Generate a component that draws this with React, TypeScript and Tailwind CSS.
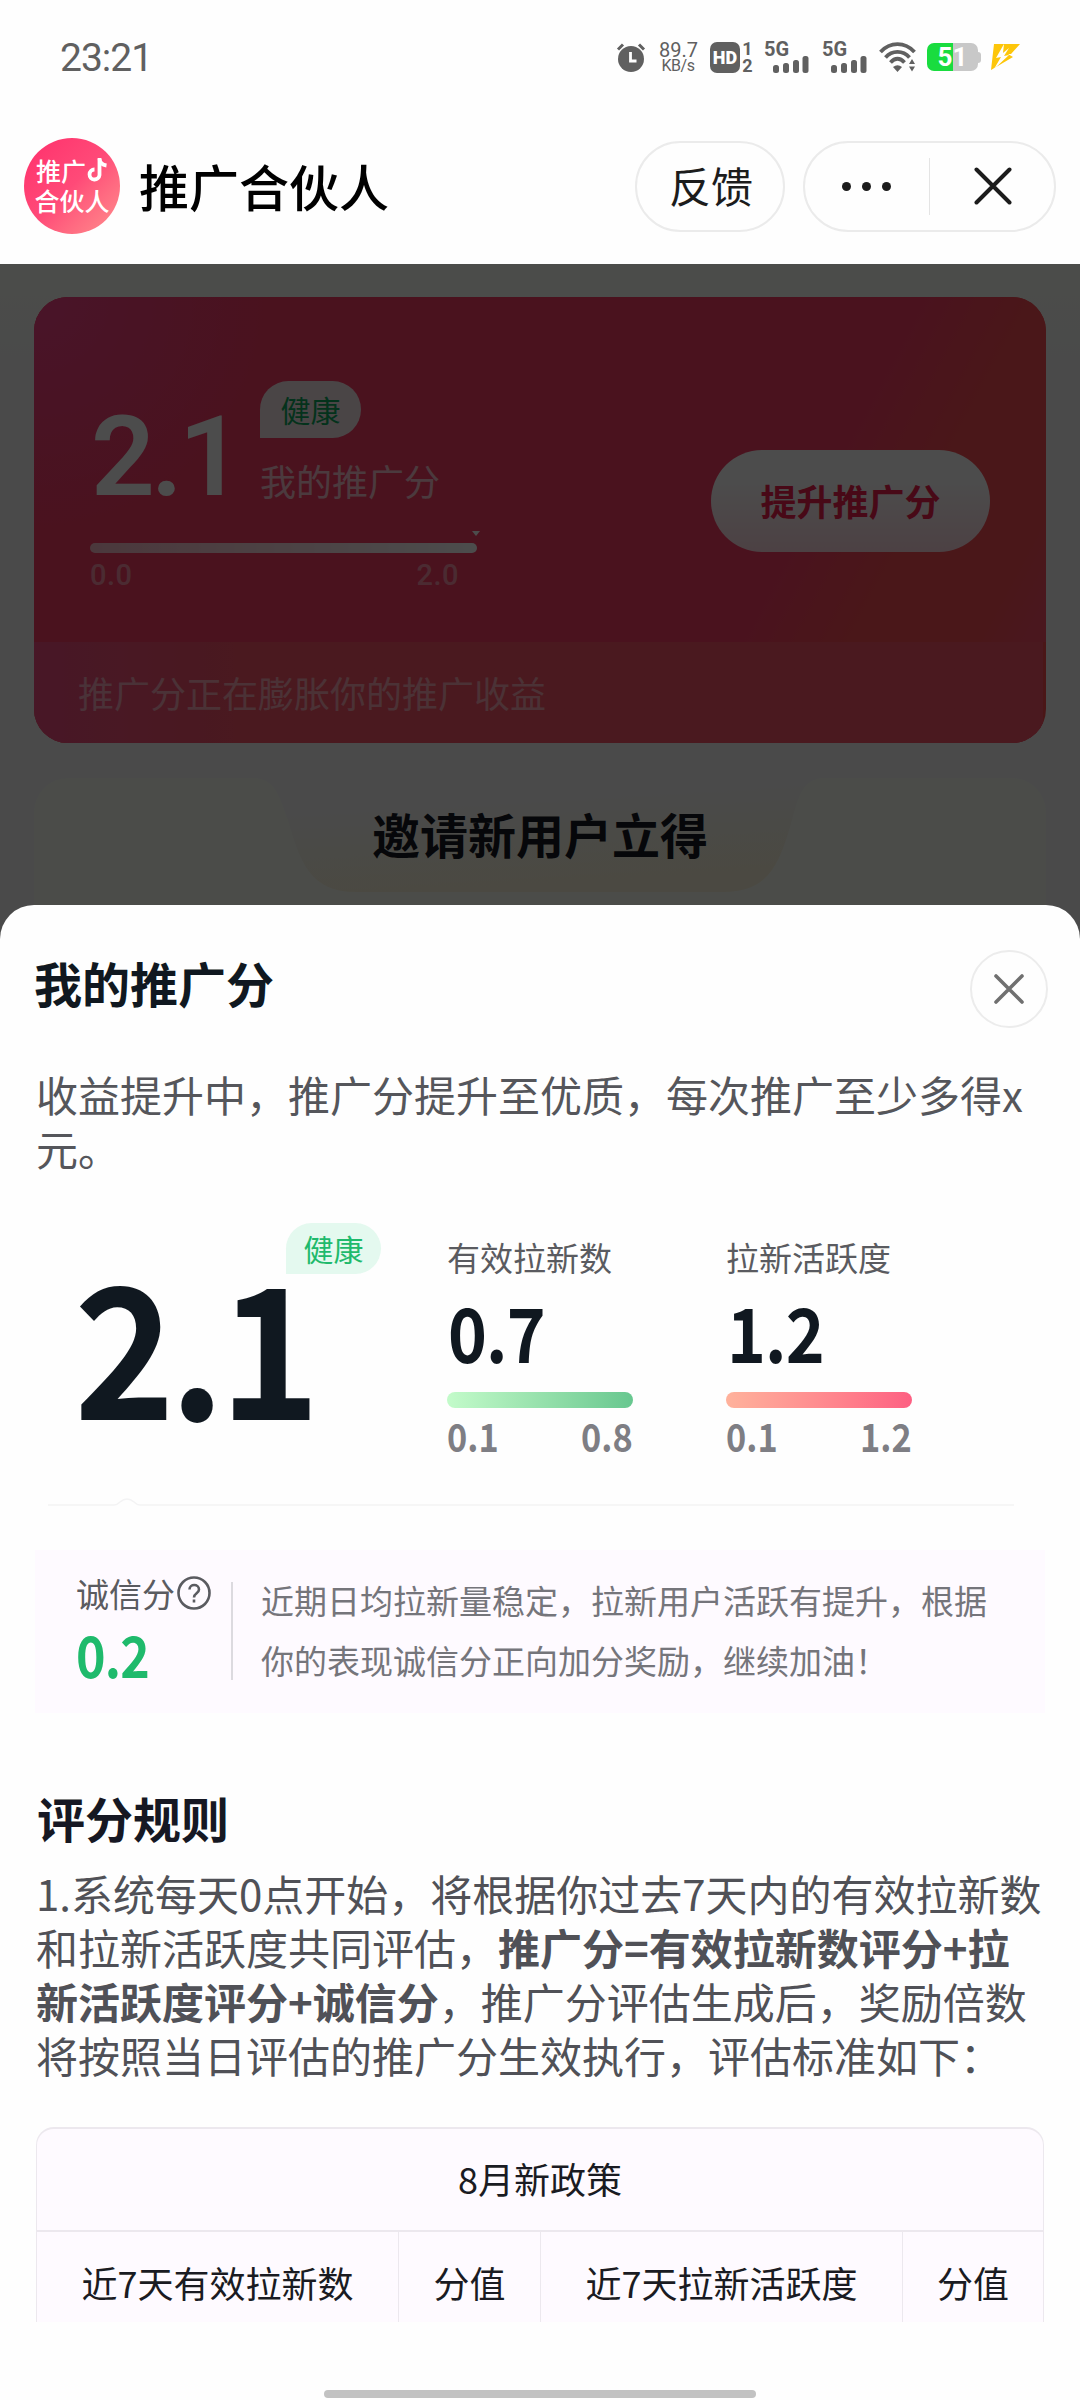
import type { ReactNode } from 'react';
import clsx from 'clsx';

const RULE_COLUMNS = ['近7天有效拉新数', '分值', '近7天拉新活跃度', '分值'];

function AlarmIcon() {
  return (
    <svg width="30" height="30" viewBox="0 0 30 30" fill="none">
      <circle cx="15" cy="17" r="13" fill="#606060" />
      <path d="M2 7.5L7 2.5M28 7.5L23 2.5" stroke="#606060" strokeWidth="3" />
      <path d="M14.5 10v9h6" stroke="#fff" strokeWidth="2.8" />
    </svg>
  );
}

function SignalIcon() {
  return (
    <div className="h-[30px] w-[44px] text-[#606060]">
      <div className="h-[14px] font-['Roboto',sans-serif] text-[20px] leading-[15px] font-bold">5G</div>
      <svg className="ml-[9px]" width="36" height="17" viewBox="0 0 36 17" fill="#606060">
        <rect x="0" y="9" width="6" height="8" rx="2.5" />
        <rect x="10" y="7" width="6" height="10" rx="2.5" />
        <rect x="20" y="4" width="6" height="13" rx="2.5" />
        <rect x="29.500" y="0" width="6" height="17" rx="2.5" />
      </svg>
    </div>
  );
}

function WifiIcon() {
  return (
    <svg width="38" height="30" viewBox="0 0 38 30" fill="none" stroke="#606060" strokeWidth="3.8">
      <path d="M1.500 10C11-.5 26-.5 35.500 10" />
      <path d="M6.500 15.500C13 8 24 8 30.500 15.500" />
      <path d="M11.500 20.500C16 15.500 21 15.500 25.500 20.500" />
      <path d="M14 25q4.500-3.500 9 0l-4.500 5z" fill="#606060" stroke="none" />
      <path d="M30 22l3-5 3 5zM30 24.500l3 5 3-5z" fill="#606060" stroke="none" />
    </svg>
  );
}

function Battery() {
  return (
    <div className="flex items-center">
      <div className="flex h-[28px] w-[51px] items-center justify-center rounded-[7px] bg-linear-to-r from-[#19dc3f] from-50% to-[#c8c8c8] to-50% font-['Roboto',sans-serif] text-[26px] leading-none font-bold text-white">
        51
      </div>
      <div className="h-[11px] w-[3px] rounded-r bg-[#c8c8c8]" />
    </div>
  );
}

function StatusBar() {
  return (
    <div className="flex h-[114px] items-center pr-[60px] pl-[60px]">
      <div className="flex-1 pt-[2px] font-['Roboto',sans-serif] text-[39px] tracking-[-1px] text-[#606060]">23:21</div>
      <AlarmIcon />
      <div className="ml-[13px] w-[38px] text-center font-['Roboto',sans-serif] text-[#606060]">
        <div className="text-[20px] leading-[16px]">89.7</div>
        <div className="text-[16px] leading-[15px] tracking-[-0.5px]">KB/s</div>
      </div>
      <div className="ml-[13px] flex h-[31px] w-[30px] items-center justify-center rounded-[7px] bg-[#606060] font-['Roboto',sans-serif] text-[18px] font-black text-white">
        HD
      </div>
      <div className="ml-[2px] w-[11px] text-center font-['Roboto',sans-serif] text-[18px] leading-[17px] font-bold text-[#606060]">
        <div>1</div>
        <div>2</div>
      </div>
      <div className="ml-[11px] flex gap-[14px]">
        <SignalIcon />
        <SignalIcon />
      </div>
      <div className="ml-[13px]">
        <WifiIcon />
      </div>
      <div className="ml-[10px]">
        <Battery />
      </div>
      <svg className="ml-[9px]" width="30" height="26" viewBox="0 0 30 26" fill="#fdc60a">
        <path d="M4 0H30L21 10h-3l5 3L1 26z" />
        <path d="M14 0L6 14l5-1-7 12 15-14-5 1 5-8-6 5z" fill="#fefefe" />
      </svg>
    </div>
  );
}

function Logo() {
  return (
    <div className="flex size-[96px] flex-col items-center justify-center rounded-full bg-linear-to-br from-[#ff2d6c] via-[#ff4a78] to-[#ff8d8d] pb-[2px] text-[25px] leading-[30px] font-medium text-white">
      <div className="flex items-center gap-px">
        推广
        <svg width="21" height="26" viewBox="0 0 21 26" fill="none" stroke="#fff" strokeWidth="3.800">
          <path d="M12.500 1v17a5 5 0 1 1-5-5.500" />
          <path d="M12.500 2c.5 4 3 6 7 6.500" />
        </svg>
      </div>
      <div>合伙人</div>
    </div>
  );
}

function NavBar() {
  return (
    <div className="flex h-[150px] items-center pr-[24px] pb-[6px] pl-[24px]">
      <Logo />
      <h1 className="-mt-[2px] ml-[19px] flex-1 text-[50px] leading-none font-medium text-black">推广合伙人</h1>
      <button className="h-[91px] w-[150px] rounded-full border-2 border-[#ebebeb] pb-[3px] pl-[2px] text-[42px] leading-none text-[#1c1c1c]">
        反馈
      </button>
      <div className="ml-[18px] flex h-[91px] w-[253px] items-center rounded-full border-2 border-[#ebebeb]">
        <div className="flex flex-1 justify-center gap-[11px] pr-[2px]">
          <i className="size-[9px] rounded-full bg-[#1c1c1c]" />
          <i className="size-[9px] rounded-full bg-[#1c1c1c]" />
          <i className="size-[9px] rounded-full bg-[#1c1c1c]" />
        </div>
        <div className="h-[57px] w-px bg-[#e4e4e4]" />
        <div className="flex flex-1 justify-center pl-[2px]">
          <svg width="38" height="38" viewBox="0 0 38 38" stroke="#1c1c1c" strokeWidth="4" strokeLinecap="round">
            <path d="M2.500 2.500l33 33M35.500 2.500l-33 33" />
          </svg>
        </div>
      </div>
    </div>
  );
}

function HealthTag({ className }: { className?: string }) {
  return (
    <span className={clsx('flex items-center justify-center rounded-full rounded-bl-none pb-[2px] leading-none', className)}>
      健康
    </span>
  );
}

function ScoreCard() {
  return (
    <div className="mx-[34px] flex h-[446px] flex-col overflow-hidden rounded-[34px] bg-[#f74a4f]">
      <div className="flex h-[345px] bg-[radial-gradient(circle_at_top_left,#f5448a_0%,#f7426b00_22%),linear-gradient(118deg,#f73e66_0%,#f73e66_74%,#f74e54_84%,#f74e54_94%,#f74e64_98%)]">
        <div className="flex-1 pl-[56px]">
          <div className="flex h-[246px]">
            <div className="w-[170px] pt-[104px] pl-px font-['Roboto',sans-serif] text-[112px] leading-[111px] font-semibold tracking-[-4px] text-white">
              2.1
            </div>
            <div className="pt-[84px]">
              <HealthTag className="h-[57px] w-[101px] bg-[#f9e8ec] text-[30px] text-[#10a860]" />
              <div className="mt-[24px] text-[36px] leading-[36px] text-white/70">我的推广分</div>
            </div>
          </div>
          <div className="relative h-[10px] w-[387px] rounded-full bg-linear-to-r from-white/65 to-white">
            <div className="absolute -top-[12px] -right-[3px] h-0 w-0 border-x-4 border-t-[5px] border-x-transparent border-t-white" />
          </div>
          <div className="mt-[8px] flex w-[369px] justify-between font-['Roboto',sans-serif] text-[29px] leading-[29px] font-medium tracking-[0.5px] text-white/45">
            <span>0.0</span>
            <span>2.0</span>
          </div>
        </div>
        <button className="mt-[153px] mr-[56px] h-[102px] w-[279px] rounded-full bg-linear-to-b from-white from-30% to-[#ffd9e2] pb-[2px] text-[36px] font-bold text-[#f01f4e]">
          提升推广分
        </button>
      </div>
      <div className="mr-[3px] flex-1 bg-[#f7546a] bg-linear-to-r from-[#f04e82] to-[#f7546a] to-20% pt-[32px] pl-[44px] text-[36px] leading-[36px] text-white/50">
        推广分正在膨胀你的推广收益
      </div>
    </div>
  );
}

function InviteCard() {
  return (
    <div className="mx-[34px] mt-[35px] h-[200px] rounded-[34px] bg-[#fafff6]">
      <svg className="block" width="1013" height="114" viewBox="0 0 1013 114">
        <defs>
          <linearGradient id="invite" x1="0" y1="0" x2="0.3" y2="1">
            <stop offset="0.3" stopColor="#f8f8f8" />
            <stop offset="1" stopColor="#faf6dc" />
          </linearGradient>
        </defs>
        <path
          d="M222 0C242 2 246 20 254 42C266 84 276 114 322 114H690C736 114 746 84 758 42C764 20 768 2 788 0Z"
          fill="url(#invite)"
        />
      </svg>
      <h2 className="-mt-[83px] text-center text-[48px] leading-[48px] font-bold text-[#161823]">邀请新用户立得</h2>
    </div>
  );
}

function Metric({ label, value, min, max, bar }: { label: string; value: string; min: string; max: string; bar: string }) {
  return (
    <div className="w-[186px]">
      <div className="text-[33px] leading-[33px] whitespace-nowrap text-[#5a5b60]">{label}</div>
      <div className="mt-[12px] ml-px origin-left scale-x-88 text-[75px] leading-[90px] font-bold tracking-[-1px] text-[#101820]">
        {value}
      </div>
      <div className={clsx('mt-[16px] h-[16px] rounded-full bg-linear-to-r', bar)} />
      <div className="mt-[7px] flex justify-between text-[39px] leading-[40px] font-bold text-[#7e7e84]">
        <span className="origin-left scale-x-88">{min}</span>
        <span className="origin-right scale-x-88">{max}</span>
      </div>
    </div>
  );
}

function IntegrityCard() {
  return (
    <div className="mx-[35px] mt-[44px] flex h-[163px] bg-[#fefaff] pt-[26px]">
      <div className="w-[196px] pl-[41px]">
        <div className="flex items-center gap-[2px] text-[33px] leading-[34px] text-[#5a5b60]">
          诚信分
          <svg width="34" height="34" viewBox="0 0 34 34" fill="none" stroke="#5a5b60" strokeWidth="2.600">
            <circle cx="17" cy="17" r="15.500" />
            <path d="M12.500 13.500c0-6 9.500-6 9.500 0c0 4-5 3.500-5 8M17 23.500v3" />
          </svg>
        </div>
        <div className="mt-[15px] origin-left scale-x-88 text-[57px] leading-[56px] font-bold tracking-[-1px] text-[#1fba6c]">0.2</div>
      </div>
      <div className="mt-[6px] h-[98px] w-[2px] bg-[#dcdadf]" />
      <p className="-mt-[5px] ml-[28px] w-[727px] text-[33px] leading-[59.500px] text-[#75757b]">
        近期日均拉新量稳定，拉新用户活跃有提升，根据你的表现诚信分正向加分奖励，继续加油！
      </p>
    </div>
  );
}

function Cell({ children, className }: { children: ReactNode; className?: string }) {
  return (
    <div className={clsx('flex h-[103px] items-center justify-center border-[#ece8ee] pb-[3px]', className)}>{children}</div>
  );
}

function ScoreSheet() {
  return (
    <div className="absolute inset-x-0 bottom-0 h-[1495px] rounded-t-[34px] bg-[#fefefe]">
      <div className="flex items-start justify-between pt-[45px] pr-[32px] pl-[34px]">
        <h2 className="pt-[8px] text-[48px] leading-[48px] font-bold text-[#101820]">我的推广分</h2>
        <button className="flex size-[78px] items-center justify-center rounded-full border-2 border-[#ececec]">
          <svg width="30" height="30" viewBox="0 0 30 30" stroke="#707070" strokeWidth="3.600" strokeLinecap="round">
            <path d="M2 2l26 26M28 2L2 28" />
          </svg>
        </button>
      </div>
      <p className="mx-[36px] mt-[39px] text-[42px] leading-[54px] text-[#55565b]">
        收益提升中，推广分提升至优质，每次推广至少多得x元。
      </p>

      <div className="mt-[48px] flex h-[234px] pl-[73px]">
        <div className="flex h-[234px] w-[374px]">
          <div className="w-[213px] origin-left scale-x-94 pt-[27px] pl-px text-[182px] leading-[182px] font-bold tracking-[-6px] whitespace-nowrap text-[#101820]">
            2.1
          </div>
          <HealthTag className="h-[51px] w-[95px] bg-[#e4f9ef] text-[30px] text-[#1fba6c]" />
        </div>
        <div className="flex gap-[93px] pt-[18px]">
          <Metric label="有效拉新数" value="0.7" min="0.1" max="0.8" bar="from-[#c3fbca] to-[#67c78f]" />
          <Metric label="拉新活跃度" value="1.2" min="0.1" max="1.2" bar="from-[#ffb29c] to-[#fd5f82]" />
        </div>
      </div>

      <svg className="mt-[41px] ml-[48px] block" width="966" height="8" viewBox="0 0 966 8" fill="none" stroke="#f3f3f4" strokeWidth="1.500">
        <path d="M0 7H66q3 0 6-3q7-6 14 0q3 3 6 3H966" />
      </svg>

      <IntegrityCard />

      <h2 className="mt-[80px] ml-[37px] text-[48px] leading-[48px] font-bold text-[#161823]">评分规则</h2>
      <p className="mx-[36px] mt-[25px] text-[42px] leading-[54px] text-[#505157]">
        1.系统每天0点开始，将根据你过去7天内的有效拉新数和拉新活跃度共同评估，
        <b>推广分=有效拉新数评分+拉新活跃度评分+诚信分</b>
        ，推广分评估生成后，奖励倍数将按照当日评估的推广分生效执行，评估标准如下：
      </p>

      <div className="mx-[36px] mt-[45px] h-[195px] overflow-hidden rounded-t-[18px] border-x border-t-2 border-[#ece8ee] bg-[#fefaff] text-[36px] leading-none text-[#1a1b22]">
        <Cell className="border-b-2">8月新政策</Cell>
        <div className="grid grid-cols-[362px_142px_362px_1fr]">
          {RULE_COLUMNS.map((name, i) => (
            <Cell key={i} className={i < 3 ? 'border-r' : ''}>
              {name}
            </Cell>
          ))}
        </div>
      </div>

      <div className="mx-auto mt-[68px] h-[8px] w-[432px] rounded-full bg-[#c2c2c2]" />
    </div>
  );
}

export default function App() {
  return (
    <main className="h-[2400px] w-[1080px] overflow-hidden bg-[#fefefe] font-['Noto_Sans_CJK_SC',sans-serif]">
      <StatusBar />
      <NavBar />
      <div className="relative h-[2136px] bg-linear-to-b from-[#fbfff8] to-[#f8f8f8] to-5% pt-[33px]">
        <ScoreCard />
        <InviteCard />
        <div className="absolute inset-0 bg-black/70" />
        <ScoreSheet />
      </div>
    </main>
  );
}
